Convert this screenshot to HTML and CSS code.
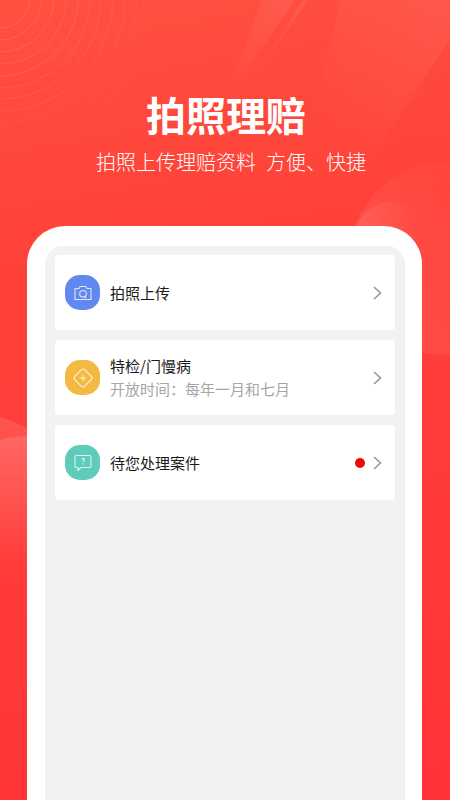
FILE: index.html
```html
<!DOCTYPE html>
<html lang="zh-CN">
<head>
    <meta charset="UTF-8">
    <meta name="viewport" content="width=device-width, initial-scale=1.0">
    <title>拍照理赔</title>
    <link rel="stylesheet" href="styles.css">
</head>
<body>

    <!-- Background decoration: rings, streaks, soft circles -->
    <svg class="decor" width="450" height="800" viewBox="0 0 450 800">
        <defs>
            <linearGradient id="streak" x1="1" y1="0" x2="0" y2="1">
                <stop offset="0" stop-color="#ffffff" stop-opacity="0.08"/>
                <stop offset="1" stop-color="#ffffff" stop-opacity="0"/>
            </linearGradient>
            <linearGradient id="corner" x1="1" y1="0" x2="0" y2="1">
                <stop offset="0" stop-color="#ffffff" stop-opacity="0.07"/>
                <stop offset="0.8" stop-color="#ffffff" stop-opacity="0"/>
            </linearGradient>
            <linearGradient id="circle-right" x1="0" y1="0.8" x2="1" y2="0.2">
                <stop offset="0" stop-color="#ffffff" stop-opacity="0.09"/>
                <stop offset="0.9" stop-color="#ffffff" stop-opacity="0"/>
            </linearGradient>
            <linearGradient id="circle-small" x1="0" y1="0.6" x2="1" y2="0.4">
                <stop offset="0" stop-color="#ffffff" stop-opacity="0.12"/>
                <stop offset="0.85" stop-color="#ffffff" stop-opacity="0"/>
            </linearGradient>
            <linearGradient id="blob" x1="0" y1="0" x2="0" y2="1">
                <stop offset="0" stop-color="#ffffff" stop-opacity="0.12"/>
                <stop offset="1" stop-color="#ffffff" stop-opacity="0"/>
            </linearGradient>
        </defs>
        <g fill="none" stroke="#ffffff">
            <circle cx="0" cy="-2" r="30" stroke-opacity="0.11"/>
            <circle cx="0" cy="-2" r="42" stroke-opacity="0.11"/>
            <circle cx="0" cy="-2" r="54" stroke-opacity="0.11"/>
            <circle cx="0" cy="-2" r="66" stroke-opacity="0.1"/>
            <circle cx="0" cy="-2" r="78" stroke-opacity="0.1"/>
            <circle cx="0" cy="-2" r="90" stroke-opacity="0.09"/>
            <circle cx="0" cy="-2" r="101" stroke-opacity="0.08"/>
            <circle cx="0" cy="-2" r="113" stroke-opacity="0.07"/>
            <circle cx="0" cy="-2" r="125" stroke-opacity="0.05"/>
            <circle cx="0" cy="-2" r="137" stroke-opacity="0.04"/>
            <circle cx="0" cy="-2" r="149" stroke-opacity="0.03"/>
        </g>
        <path d="M262 0H295L225 100Z" fill="url(#streak)"/>
        <path d="M303 0H308L250 85Z" fill="url(#streak)"/>
        <path d="M340 0H450V40L360 175H300Z" fill="url(#corner)"/>
        <circle cx="445" cy="259" r="96" fill="url(#circle-right)"/>
        <circle cx="392" cy="240" r="38" fill="url(#circle-small)"/>
        <path d="M0 417C10 420 20 424 30 430V560H0Z" fill="url(#blob)"/>
        <path d="M0 440C10 437 20 436 30 436V580H0Z" fill="url(#blob)"/>
    </svg>

    <div class="header">
        <h1 class="title">拍照理赔</h1>
        <p class="subtitle"><span>拍照上传理赔资料</span><span>方便、快捷</span></p>
    </div>

    <!-- White phone frame holding the menu -->
    <div class="frame">
        <div class="screen">

            <div class="item">
                <div class="icon icon-blue">
                    <svg width="20" height="20" viewBox="0 0 20 20" fill="none" stroke="#dfe6fb" stroke-width="1.1">
                        <path d="M2 5.5H6L7.2 3.5H12.8L14 5.5H18V16.5H2Z" stroke-linejoin="round"/>
                        <circle cx="10" cy="10.8" r="3.3"/>
                        <path d="M11.5 13.5L13 15"/>
                    </svg>
                </div>
                <div class="text">
                    <div class="name">拍照上传</div>
                </div>
                <svg class="arrow" width="9" height="14" viewBox="0 0 9 14" fill="none" stroke="#949494" stroke-width="1.5"><path d="M1 1L7.5 7L1 13"/></svg>
            </div>

            <div class="item">
                <div class="icon icon-yellow">
                    <svg width="24" height="24" viewBox="0 0 24 24" fill="none" stroke="#fdeecb" stroke-width="1.2">
                        <rect x="5" y="5" width="14" height="14" rx="2.5" transform="rotate(45 12 12)"/>
                        <path d="M12 8.8V15.2M8.8 12H15.2"/>
                    </svg>
                </div>
                <div class="text">
                    <div class="name">特检/门慢病</div>
                    <div class="desc">开放时间：每年一月和七月</div>
                </div>
                <svg class="arrow" width="9" height="14" viewBox="0 0 9 14" fill="none" stroke="#949494" stroke-width="1.5"><path d="M1 1L7.5 7L1 13"/></svg>
            </div>

            <div class="item">
                <div class="icon icon-green">
                    <svg width="20" height="20" viewBox="0 0 20 20" fill="none" stroke="#d9f3ee" stroke-width="1.1">
                        <path d="M3.5 2.5H16.5C17.3 2.5 18 3.2 18 4V13C18 13.8 17.3 14.5 16.5 14.5H8L5 17.5V14.5H3.5C2.7 14.5 2 13.8 2 13V4C2 3.2 2.7 2.5 3.5 2.5Z" stroke-linejoin="round"/>
                        <path d="M8.6 6.6C8.8 5.7 9.5 5.4 10.1 5.4C11 5.4 11.6 6 11.6 6.7C11.6 7.7 10.2 7.9 10.2 9.2"/>
                        <path d="M10.2 10.4V11.4"/>
                    </svg>
                </div>
                <div class="text">
                    <div class="name">待您处理案件</div>
                </div>
                <span class="dot"></span>
                <svg class="arrow" width="9" height="14" viewBox="0 0 9 14" fill="none" stroke="#949494" stroke-width="1.5"><path d="M1 1L7.5 7L1 13"/></svg>
            </div>

        </div>
    </div>

</body>
</html>
```

FILE: styles.css
```css
body {
    margin: 0;
    width: 450px;
    height: 800px;
    overflow: hidden;
    position: relative;
    background: linear-gradient(170deg, #ff5040 0%, #ff4239 30%, #ff3338 100%);
    font-family: "Noto Sans CJK SC", "Noto Sans", sans-serif;
}

/* Sits behind everything */
.decor {
    position: absolute;
    top: 0;
    left: 0;
}

.header {
    position: relative;
    padding-top: 90px;
    text-align: center;
    color: #ffffff;
}

.title {
    margin: 0 0 0 2px;
    font-size: 40px;
    line-height: 48px;
    font-weight: 700;
}

.subtitle {
    margin: 12px 0 0 12px;
    font-size: 20px;
    line-height: 24px;
    font-weight: 300;
    display: flex;
    justify-content: center;
    gap: 10px;
}

/* White phone frame */
.frame {
    position: relative;
    box-sizing: border-box;
    width: 395px;
    height: 574px;
    margin: 52px 0 0 27px;
    padding: 20px 17px 0 18px;
    background-color: #ffffff;
    border-radius: 38px 38px 0 0;
}

.screen {
    box-sizing: border-box;
    height: 554px;
    padding: 9px 10px 0;
    background-color: #f2f2f2;
    border-radius: 18px 18px 0 0;
    display: flex;
    flex-direction: column;
    gap: 10px;
}

.item {
    height: 75px;
    padding: 0 13px 0 10px;
    background-color: #ffffff;
    border-radius: 4px;
    display: flex;
    align-items: center;
}

.icon {
    width: 35px;
    height: 35px;
    border-radius: 15px;
    display: flex;
    align-items: center;
    justify-content: center;
    flex-shrink: 0;
}

.icon-blue {
    background-color: #6088ee;
}

.icon-yellow {
    background-color: #f4b942;
}

.icon-green {
    background-color: #5ecbbb;
}

.text {
    flex: 1;
    margin-left: 10px;
}

.name {
    font-size: 15px;
    line-height: 23px;
    color: #1a1a1a;
}

.desc {
    font-size: 15px;
    line-height: 23px;
    color: #a6a6a6;
    margin-bottom: 1px;
}

.dot {
    width: 10px;
    height: 10px;
    margin-right: 8px;
    border-radius: 50%;
    background-color: #f00808;
}

.arrow {
    flex-shrink: 0;
}
```
